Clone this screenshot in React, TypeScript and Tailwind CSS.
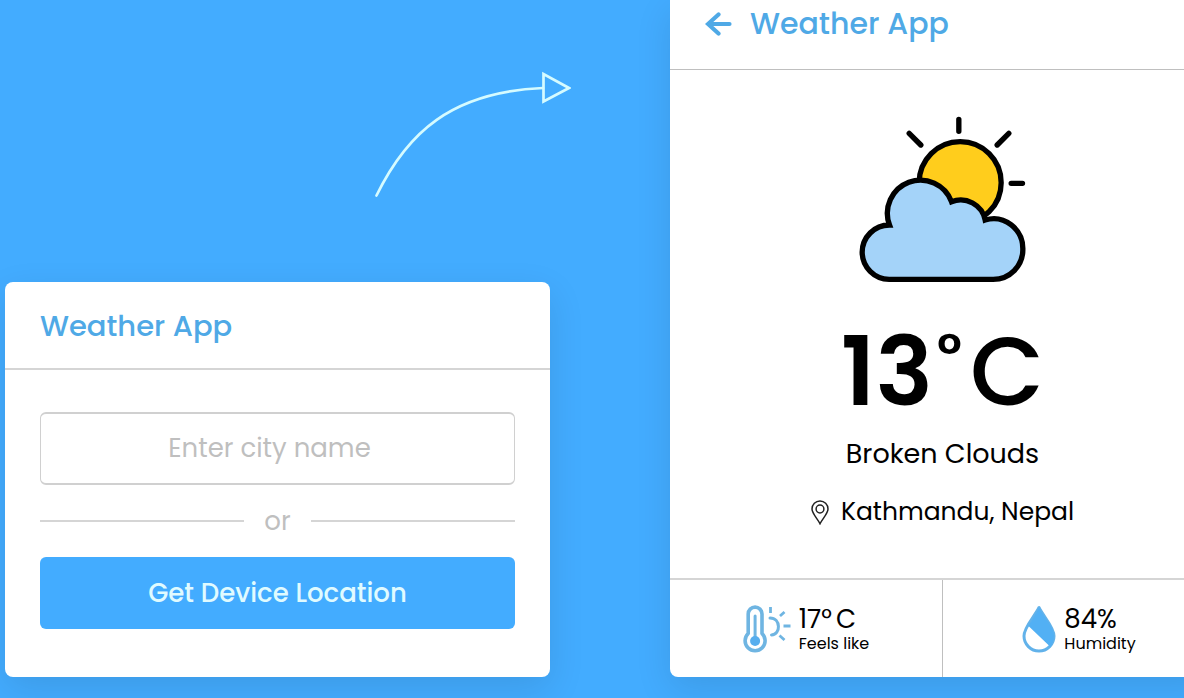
import type { ReactNode } from "react";

function CurvedArrow() {
  return (
    <svg
      className="ml-[370px] h-[126px] w-[196px]"
      viewBox="0 0 196 126"
      fill="none"
      stroke="#d5fbff"
      strokeWidth="2.7"
      strokeLinecap="round"
      aria-hidden="true"
    >
      <path d="M1.5 124.500 C32 62 76 21 168 17" />
      <path d="M168.500 3 V30.500 L194 17 Z" />
    </svg>
  );
}

function BackArrow() {
  return (
    <svg
      className="h-6 w-[27px]"
      viewBox="0 0 27 24"
      fill="none"
      stroke="#4fa9e6"
      strokeWidth="4.2"
      strokeLinecap="round"
      aria-hidden="true"
    >
      <path d="M13.500 2.500 L3 12 L13.500 21.500 M4 12 H24.500" />
    </svg>
  );
}

function CloudSun() {
  return (
    <svg
      className="h-[168px] w-[167px]"
      viewBox="28 18 500 504"
      stroke="#000"
      strokeWidth="16"
      strokeLinecap="round"
      role="img"
      aria-label="Sun behind a cloud"
    >
      <circle cx="331" cy="218" r="123" fill="#ffcd1c" />
      <path d="M327 28 V64 M178 70 L213 105 M477 70 L442 105 M484 220 H518" fill="none" />
      <path
        d="M118 508 H430 A89 89 0 0 0 519 418 A88 90 0 0 0 406 330 A75 75 0 0 0 305 275 A96 96 0 0 0 119 345 A82 82 0 0 0 37 427 A82 82 0 0 0 118 508 Z"
        fill="#a4d3f9"
      />
    </svg>
  );
}

function Pin() {
  return (
    <svg
      className="h-[25px] w-[18px]"
      viewBox="0 0 18 25"
      fill="none"
      stroke="#222"
      strokeWidth="1.5"
      aria-hidden="true"
    >
      <path d="M9 23.800 C6.500 18.500 1 13.500 1 9 A8 8 0 0 1 17 9 C17 13.500 11.500 18.500 9 23.800 Z" />
      <circle cx="9" cy="9" r="3.900" />
    </svg>
  );
}

function ThermometerSun() {
  return (
    <svg className="h-12 w-12" viewBox="0 0 48 48" fill="none" stroke="#6fb5e2" strokeLinecap="round" aria-hidden="true">
      <path
        d="M5.200 28.500 V9 A6.900 6.900 0 0 1 19 9 V28.500 A10 10 0 1 1 5.200 28.500 Z"
        strokeWidth="3.600"
        strokeLinejoin="round"
      />
      <path d="M12.100 11 V33" strokeWidth="3" />
      <circle cx="12.100" cy="36" r="5" fill="#57aeee" stroke="none" />
      <path d="M27 13 C38 13 38 29.500 28.500 30" strokeWidth="3" />
      <g strokeWidth="2.800" strokeLinecap="butt">
        <path d="M27.500 2 V8 M37 11 L41.500 7 M40.500 21 H47.500 M36.500 30.500 L41.500 35" />
      </g>
    </svg>
  );
}

function Droplet() {
  return (
    <svg className="h-12 w-[34px]" viewBox="0 0 34 48" aria-hidden="true">
      <path
        d="M17 2.500 C13 11 2 22 2 31 A15 15 0 0 0 32 31 C32 22 21 11 17 2.500 Z"
        fill="#fff"
        stroke="#62b2ea"
        strokeWidth="3"
        strokeLinejoin="round"
      />
      <path d="M17 2.500 C13 11 9 16 6.500 21 L28.500 42 C31 38 32 34.500 32 31 C32 22 21 11 17 2.500 Z" fill="#52b0f4" />
    </svg>
  );
}

function Detail({ icon, value, label }: { icon: ReactNode; value: ReactNode; label: string }) {
  return (
    <div className="flex flex-1 items-center justify-center gap-2 py-6">
      {icon}
      <div>
        <p className="text-[26px] leading-[30px]">{value}</p>
        <p className="text-base leading-[19px]">{label}</p>
      </div>
    </div>
  );
}

export default function App() {
  return (
    <main className="flex min-h-screen items-end gap-[120px] overflow-hidden bg-[#43acff] pb-[21px] pl-[5px] font-['Poppins','Inter',sans-serif] text-black">
      <div className="flex w-[545px] shrink-0 flex-col gap-[85px]">
        <CurvedArrow />
        <section className="rounded-lg bg-white shadow-[0_12px_36px_rgba(0,0,0,0.1)]">
          <header className="border-b-2 border-[#d5d5d5] px-[35px] pt-[23px] pb-[21px]">
            <h1 className="text-[29px] leading-[42px] font-medium text-[#4fa9e6]">Weather App</h1>
          </header>
          <form className="px-[35px] pt-[42px] pb-12" onSubmit={(e) => e.preventDefault()}>
            <input
              type="text"
              aria-label="City name"
              placeholder="Enter city name"
              className="block h-[73px] w-full rounded-md border-x border-y-2 border-[#d0d0d0] pr-8 pl-4 text-center text-[26px] outline-none placeholder:text-[#bfbfbf]"
            />
            <div className="flex h-[72px] items-center gap-5 text-[26px] text-[#bfbfbf]">
              <span className="h-0.5 flex-1 bg-[#d5d5d5]" />
              or
              <span className="h-0.5 flex-1 bg-[#d5d5d5]" />
            </div>
            <button type="submit" className="block h-[72px] w-full rounded-md bg-[#43acff] text-[26px] font-medium text-[#e0fbff]">
              Get Device Location
            </button>
          </form>
        </section>
      </div>

      <section className="w-[545px] shrink-0 rounded-b-lg bg-white shadow-[0_12px_36px_rgba(0,0,0,0.1)]">
        <header className="flex items-center gap-[18px] border-b border-[#bfbfbf] px-[35px] pt-[3px] pb-6">
          <button type="button" aria-label="Back">
            <BackArrow />
          </button>
          <h2 className="text-[30px] leading-[42px] font-medium text-[#4fa9e6]">Weather App</h2>
        </header>
        <div className="flex flex-col items-center pt-[46px] pb-[46px]">
          <CloudSun />
          <p className="mt-10 flex h-24 items-center text-[96px] leading-none font-semibold">
            13
            <span className="ml-1 self-start text-[56px] leading-[62px]">°</span>
            <span className="ml-2 font-medium">C</span>
          </p>
          <p className="mt-[14px] text-[27px] leading-10">Broken Clouds</p>
          <p className="mt-[18px] flex items-center gap-3 text-[25px] leading-10">
            <Pin />
            Kathmandu, Nepal
          </p>
        </div>
        <footer className="flex border-t-2 border-[#d5d5d5]">
          <Detail
            icon={<ThermometerSun />}
            value={
              <>
                17°<span className="ml-1">C</span>
              </>
            }
            label="Feels like"
          />
          <span className="w-px bg-[#bfbfbf]" />
          <Detail icon={<Droplet />} value="84%" label="Humidity" />
        </footer>
      </section>
    </main>
  );
}
